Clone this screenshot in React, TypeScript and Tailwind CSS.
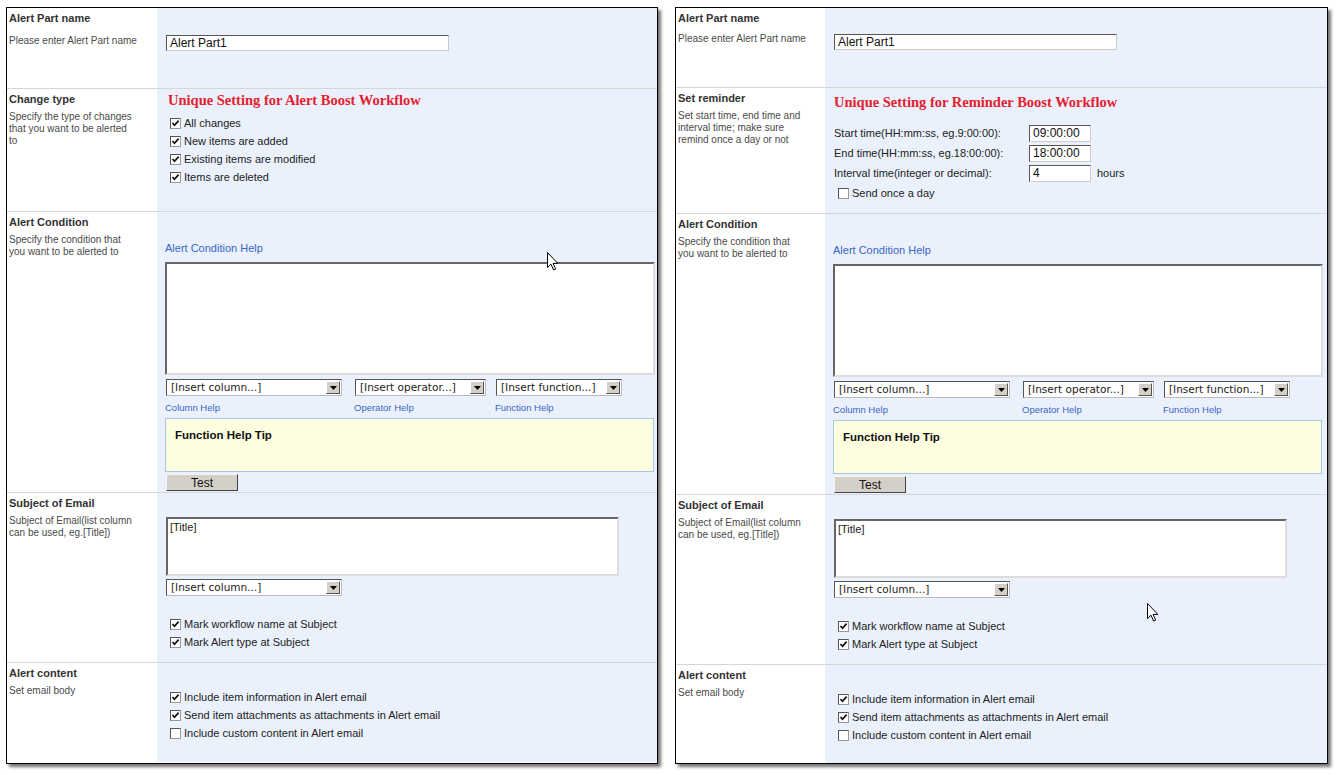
import type { ReactNode } from "react";

const sans = "font-['Liberation_Sans',Arial,sans-serif]";

function Check({ checked = true, label }: { checked?: boolean; label: string }) {
  return (
    <div className="flex h-[18px] items-center text-[11px] text-[#222]">
      <span className="relative mr-[3px] h-[11px] w-[11px] shrink-0 border border-t-[#555] border-l-[#555] border-r-[#999] border-b-[#999] bg-white">
        {checked && (
          <svg viewBox="0 0 9 9" className="absolute left-[0px] top-[0px] h-[9px] w-[9px]">
            <path d="M1.5 4 L3.5 6.2 L7.6 1.6" fill="none" stroke="#111" strokeWidth="1.7" />
          </svg>
        )}
      </span>
      {label}
    </div>
  );
}

function Select({ text, className }: { text: string; className: string }) {
  return (
    <div
      className={`flex h-[17px] items-center justify-between border border-t-[#555] border-l-[#555] border-r-[#bbb] border-b-[#bbb] bg-white pl-[4px] pr-[1px] font-['DejaVu_Sans',Verdana,sans-serif] text-[10.5px] text-[#222] ${className}`}
    >
      <span className="leading-none">{text}</span>
      <span className="flex h-[13px] w-[14px] items-center justify-center border border-t-white border-l-white border-r-[#555] border-b-[#555] bg-[#d4d0c8]">
        <svg viewBox="0 0 7 4" className="h-[4px] w-[7px]">
          <path d="M0 0 H7 L3.5 4 Z" fill="#000" />
        </svg>
      </span>
    </div>
  );
}

function TextBox({ value, className }: { value: string; className: string }) {
  return (
    <div
      className={`flex items-center border border-t-[#555] border-l-[#555] border-r-[#ccc] border-b-[#ccc] bg-white pl-[3px] text-[12px] leading-none text-[#111] ${className}`}
    >
      {value}
    </div>
  );
}

function Row({
  height,
  first = false,
  labelW = "w-[150px]",
  descGap = "mt-[5px]",
  title,
  desc,
  children,
}: {
  height: string;
  first?: boolean;
  labelW?: string;
  descGap?: string;
  title: string;
  desc: ReactNode;
  children: ReactNode;
}) {
  return (
    <div className={`flex ${height} ${first ? "" : "border-t border-[#d6d6d6]"}`}>
      <div className={`${labelW} shrink-0 bg-white pl-[2px] pt-[3px]`}>
        <div className="text-[11px] font-bold leading-[14px] text-[#333]">{title}</div>
        <div className={`${descGap} text-[10px] leading-[12px] text-[#4a4a4a]`}>{desc}</div>
      </div>
      <div className="flex-1 bg-[#eaf1fd] pl-[9px]">{children}</div>
    </div>
  );
}

function ConditionBlock() {
  return (
    <div className="pt-[29px]">
      <div className="text-[11px] leading-[14px] text-[#3a66c4]">Alert Condition Help</div>
      <div className="mt-[7px] h-[113px] w-[490px] border-2 border-t-[#666] border-l-[#666] border-r-[#ddd] border-b-[#ddd] bg-white" />
      <div className="mt-[4px] flex">
        <Select text="[Insert column...]" className="ml-[1px] w-[176px]" />
        <Select text="[Insert operator...]" className="ml-[13px] w-[131px]" />
        <Select text="[Insert function...]" className="ml-[10px] w-[126px]" />
      </div>
      <div className="mt-[6px] flex text-[9.5px] leading-[12px] text-[#3a66c4]">
        <span className="w-[189px]">Column Help</span>
        <span className="w-[141px]">Operator Help</span>
        <span>Function Help</span>
      </div>
      <div className="mt-[4px] h-[54px] w-[489px] border border-[#a9c6e6] bg-[#fdfddf] pl-[9px] pt-[9px] text-[11.5px] font-bold leading-[14px] text-[#111]">
        Function Help Tip
      </div>
      <button className="ml-[1px] mt-[2px] flex h-[17px] w-[72px] items-center justify-center border border-t-[#f5f5f5] border-l-[#f5f5f5] border-r-[#444] border-b-[#444] bg-[#d4d0c8] text-[12px] leading-none text-[#111]">
        Test
      </button>
    </div>
  );
}

function SubjectBlock() {
  return (
    <div className="pt-[24px]">
      <div className="h-[59px] w-[453px] border-2 border-t-[#666] border-l-[#666] border-r-[#ddd] border-b-[#ddd] bg-white pl-[2px] pt-[2px] text-[11px] leading-[13px] text-[#222]">
        [Title]
      </div>
      <Select text="[Insert column...]" className="mt-[3px] w-[176px]" />
      <div className="mt-[19px] pl-[4px]">
        <Check label="Mark workflow name at Subject" />
        <Check label="Mark Alert type at Subject" />
      </div>
    </div>
  );
}

function ContentBlock() {
  return (
    <div className="pl-[4px] pt-[25px]">
      <Check label="Include item information in Alert email" />
      <Check label="Send item attachments as attachments in Alert email" />
      <Check checked={false} label="Include custom content in Alert email" />
    </div>
  );
}

function Heading({ children }: { children: ReactNode }) {
  return (
    <div className="font-['Liberation_Serif','Times_New_Roman',serif] text-[14.5px] font-bold leading-[18px] text-[#e5202e]">
      {children}
    </div>
  );
}

function AlertPanel() {
  return (
    <div className="w-[652px] border border-black shadow-[3px_3px_3px_rgba(0,0,0,0.55)]">
      <Row first height="h-[80px]" descGap="mt-[10px]" title="Alert Part name" desc="Please enter Alert Part name">
        <TextBox value="Alert Part1" className="mt-[27px] h-[16px] w-[283px]" />
      </Row>
      <Row
        height="h-[123px]"
        title="Change type"
        desc={
          <>
            Specify the type of changes
            <br />
            that you want to be alerted
            <br />
            to
          </>
        }
      >
        <div className="pl-[2px] pt-[2px]">
          <Heading>Unique Setting for Alert Boost Workflow</Heading>
        </div>
        <div className="mt-[5px] pl-[4px]">
          <Check label="All changes" />
          <Check label="New items are added" />
          <Check label="Existing items are modified" />
          <Check label="Items are deleted" />
        </div>
      </Row>
      <Row
        height="h-[281px]"
        title="Alert Condition"
        desc={
          <>
            Specify the condition that
            <br />
            you want to be alerted to
          </>
        }
      >
        <div className="-ml-[1px]">
          <ConditionBlock />
        </div>
      </Row>
      <Row
        height="h-[170px]"
        title="Subject of Email"
        desc={
          <>
            Subject of Email(list column
            <br />
            can be used, eg.[Title])
          </>
        }
      >
        <SubjectBlock />
      </Row>
      <Row height="h-[100px]" title="Alert content" desc="Set email body">
        <ContentBlock />
      </Row>
    </div>
  );
}

function TimeRow({ label, value, suffix }: { label: string; value: string; suffix?: string }) {
  return (
    <div className="flex h-[20px] items-center text-[11px] text-[#222]">
      <span className="w-[195px]">{label}</span>
      <TextBox value={value} className="h-[17px] w-[62px]" />
      {suffix && <span className="ml-[6px]">{suffix}</span>}
    </div>
  );
}

function ReminderPanel() {
  const lw = "w-[149px]";
  return (
    <div className="w-[653px] border border-black shadow-[3px_3px_3px_rgba(0,0,0,0.55)]">
      <Row first height="h-[79px]" labelW={lw} descGap="mt-[8px]" title="Alert Part name" desc="Please enter Alert Part name">
        <TextBox value="Alert Part1" className="mt-[26px] h-[16px] w-[283px]" />
      </Row>
      <Row
        height="h-[126px]"
        labelW={lw}
        title="Set reminder"
        desc={
          <>
            Set start time, end time and
            <br />
            interval time; make sure
            <br />
            remind once a day or not
          </>
        }
      >
        <div className="pt-[5px]">
          <Heading>Unique Setting for Reminder Boost Workflow</Heading>
        </div>
        <div className="mt-[12px]">
          <TimeRow label="Start time(HH:mm:ss, eg.9:00:00):" value="09:00:00" />
          <TimeRow label="End time(HH:mm:ss, eg.18:00:00):" value="18:00:00" />
          <TimeRow label="Interval time(integer or decimal):" value="4" suffix="hours" />
        </div>
        <div className="mt-[1px] pl-[4px]">
          <Check checked={false} label="Send once a day" />
        </div>
      </Row>
      <Row
        height="h-[281px]"
        labelW={lw}
        title="Alert Condition"
        desc={
          <>
            Specify the condition that
            <br />
            you want to be alerted to
          </>
        }
      >
        <div className="-ml-[1px]">
          <ConditionBlock />
        </div>
      </Row>
      <Row
        height="h-[170px]"
        labelW={lw}
        title="Subject of Email"
        desc={
          <>
            Subject of Email(list column
            <br />
            can be used, eg.[Title])
          </>
        }
      >
        <SubjectBlock />
      </Row>
      <Row height="h-[99px]" labelW={lw} title="Alert content" desc="Set email body">
        <ContentBlock />
      </Row>
    </div>
  );
}

function Cursor({ className }: { className: string }) {
  return (
    <svg viewBox="0 0 12 19" className={`absolute h-[19px] w-[12px] ${className}`}>
      <path
        d="M0.5 0.5 L0.5 15.5 L4 12.2 L6.6 18 L8.6 17.1 L6.1 11.4 L10.8 11.4 Z"
        fill="#fff"
        stroke="#000"
        strokeWidth="1"
        strokeLinejoin="round"
      />
    </svg>
  );
}

export default function App() {
  return (
    <div className={`relative h-[775px] w-[1339px] overflow-hidden bg-white ${sans}`}>
      <div className="flex gap-[17px] pl-[6px] pt-[7px]">
        <AlertPanel />
        <ReminderPanel />
      </div>
      <Cursor className="left-[547px] top-[252px]" />
      <Cursor className="left-[1147px] top-[603px]" />
    </div>
  );
}
